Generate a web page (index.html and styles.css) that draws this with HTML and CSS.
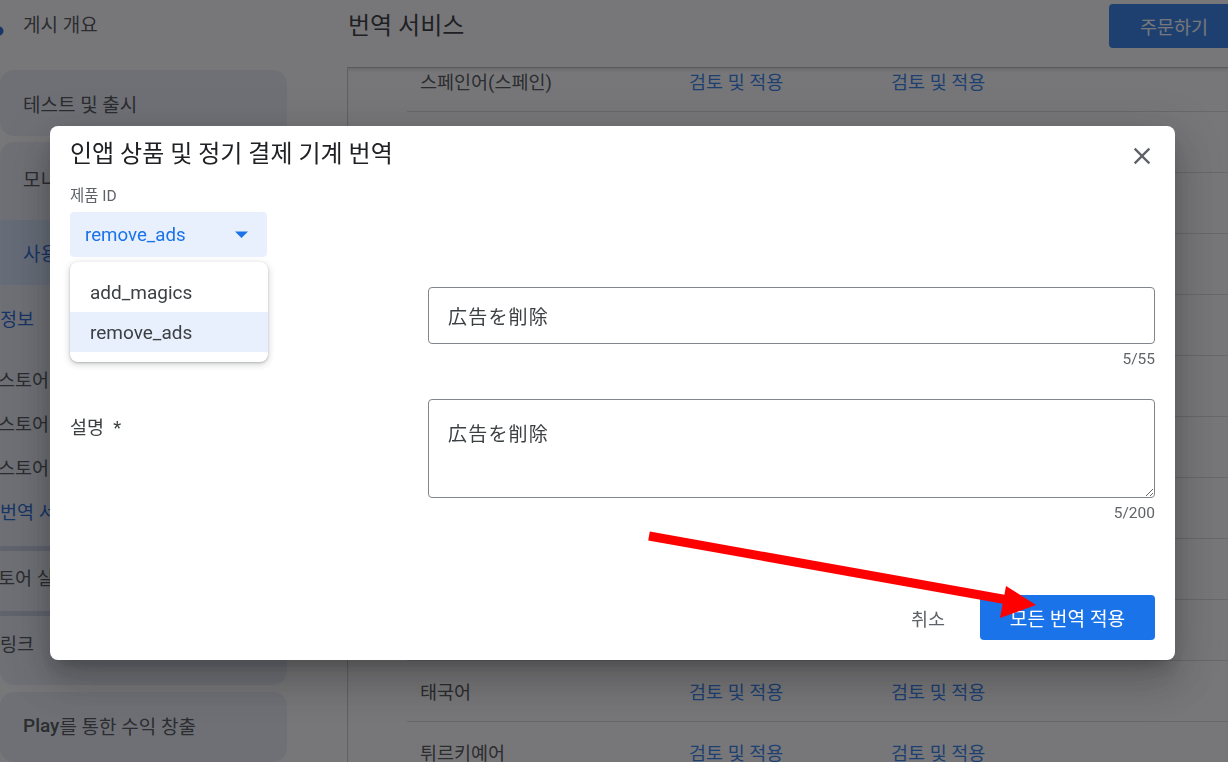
FILE: index.html
```html
<!DOCTYPE html>
<html lang="ko">
<head>
<meta charset="utf-8">
<title>번역 서비스</title>
<link rel="stylesheet" href="styles.css">
</head>
<body>
<div class="page">
  <aside class="sidebar">
    <div class="nav-top">
      <svg class="nav-icon" viewBox="0 0 16 24" width="16" height="24"><rect x="2" y="2" width="10" height="8" rx="2" fill="#5f6368"/><circle cx="11" cy="16" r="4.5" fill="#0b57d0"/></svg>
      <span>게시 개요</span>
    </div>
    <div class="nav-card card-a">테스트 및 출시</div>
    <div class="nav-card card-b">
      <div class="nav-row">모니터링 및 개선</div>
      <div class="nav-row active">사용자 확보</div>
      <div class="sub-list">
        <div class="sub link">정보</div>
        <div class="sub gap">스토어 설정</div>
        <div class="sub">스토어 등록정보</div>
        <div class="sub">스토어 맞춤설정</div>
        <div class="sub link">번역 서비스</div>
      </div>
      <div class="band"></div>
      <div class="sub-row exp">스토어 실험</div>
      <div class="band"></div>
      <div class="sub-row last">링크</div>
    </div>
    <div class="nav-card card-play"><span class="play">Play</span>를 통한 수익 창출</div>
  </aside>

  <main class="main">
    <header class="main-head">
      <h1 class="page-title">번역 서비스</h1>
      <button class="order-btn">주문하기</button>
    </header>
    <section class="table-wrap">
      <div class="rows">
        <div class="row"><span class="c1">스페인어(스페인)</span><span class="c2">검토 및 적용</span><span class="c3">검토 및 적용</span></div>
        <div class="row"><span class="c1">스페인어(미국)</span><span class="c2">검토 및 적용</span><span class="c3">검토 및 적용</span></div>
        <div class="row"><span class="c1">스와힐리어</span><span class="c2">검토 및 적용</span><span class="c3">검토 및 적용</span></div>
        <div class="row"><span class="c1">스웨덴어</span><span class="c2">검토 및 적용</span><span class="c3">검토 및 적용</span></div>
        <div class="row"><span class="c1">슬로바키아어</span><span class="c2">검토 및 적용</span><span class="c3">검토 및 적용</span></div>
        <div class="row"><span class="c1">슬로베니아어</span><span class="c2">검토 및 적용</span><span class="c3">검토 및 적용</span></div>
        <div class="row"><span class="c1">아랍어</span><span class="c2">검토 및 적용</span><span class="c3">검토 및 적용</span></div>
        <div class="row"><span class="c1">타갈로그어</span><span class="c2">검토 및 적용</span><span class="c3">검토 및 적용</span></div>
        <div class="row"><span class="c1">타밀어</span><span class="c2">검토 및 적용</span><span class="c3">검토 및 적용</span></div>
        <div class="row"><span class="c1">텔루구어</span><span class="c2">검토 및 적용</span><span class="c3">검토 및 적용</span></div>
        <div class="row"><span class="c1">태국어</span><span class="c2">검토 및 적용</span><span class="c3">검토 및 적용</span></div>
        <div class="row"><span class="c1">튀르키예어</span><span class="c2">검토 및 적용</span><span class="c3">검토 및 적용</span></div>
      </div>
    </section>
  </main>
</div>

<div class="scrim"></div>

<div class="dialog">
  <div class="dialog-head">
    <h2 class="dialog-title">인앱 상품 및 정기 결제 기계 번역</h2>
    <svg class="close" viewBox="0 0 24 24" width="28" height="28"><path d="M19 6.41L17.59 5 12 10.59 6.41 5 5 6.41 10.59 12 5 17.59 6.41 19 12 13.41 17.59 19 19 17.59 13.41 12z" fill="#5f6368"/></svg>
  </div>
  <div class="field-label">제품 ID</div>
  <div class="select">
    <span>remove_ads</span>
    <svg viewBox="0 0 13 7" width="13" height="7"><path d="M0 0.5h13L6.5 7z" fill="#1a73e8"/></svg>
  </div>

  <div class="form-row first">
    <div class="row-label">이름 *</div>
    <div class="row-field">
      <input class="text-input" type="text" value="広告を削除">
      <div class="counter">5/55</div>
    </div>
  </div>
  <div class="form-row second">
    <div class="row-label desc">설명&nbsp; *</div>
    <div class="row-field">
      <textarea class="text-area">広告を削除</textarea>
      <div class="counter">5/200</div>
    </div>
  </div>

  <div class="actions">
    <button class="btn-text">취소</button>
    <button class="btn-primary">모든 번역 적용</button>
  </div>

  <div class="menu">
    <div class="menu-item">add_magics</div>
    <div class="menu-item sel">remove_ads</div>
  </div>
</div>

<svg class="annot" width="1228" height="762" viewBox="0 0 1228 762">
  <line x1="649" y1="536" x2="1008" y2="600" stroke="#ff0000" stroke-width="9"/>
  <polygon points="1036,605 1006,586 1000,618" fill="#ff0000"/>
</svg>
</body>
</html>
```

FILE: styles.css
```css
* { box-sizing: border-box; }
html, body { margin: 0; padding: 0; }
body {
  width: 1228px;
  height: 762px;
  overflow: hidden;
  background: #fff;
  color: #202124;
  font-family: Roboto, "Noto Sans CJK KR", sans-serif;
}

.page { display: flex; height: 762px; overflow: hidden; }

/* sidebar */
.sidebar { width: 307px; flex: none; padding-right: 20px; overflow: hidden; }
.nav-top {
  height: 46px; display: flex; align-items: center;
  font-size: 19px; color: #3c4043;
}
.nav-icon { margin-left: -12px; margin-right: 19px; margin-top: 8px; flex: none; }
.nav-card { background: #e9eef6; border-radius: 14px; }
.card-a {
  margin-top: 24px; height: 66px; display: flex; align-items: center;
  padding-left: 23px; font-size: 19px; color: #3c4043;
}
.card-b { margin-top: 6px; padding-bottom: 11px; overflow: hidden; }
.nav-row {
  height: 72px; display: flex; align-items: center; padding-left: 23px;
  font-size: 19px; color: #3c4043; white-space: nowrap;
}
.nav-row.active { margin-top: 6px; height: 65px; background: #d3e3fd; color: #0b57d0; }
.sub-list { padding: 11px 0 13px; }
.sub {
  height: 44px; display: flex; align-items: center;
  font-size: 18.5px; color: #3c4043; white-space: nowrap; margin-left: -2px;
}
.sub.gap { margin-top: 17px; }
.sub.link { color: #0b57d0; margin-left: 0; }
.band { height: 5px; background: #c5cde0; }
.sub-row {
  display: flex; align-items: center; font-size: 18.5px; color: #3c4043; white-space: nowrap;
}
.sub-row.exp { height: 60px; padding-bottom: 8px; margin-left: -19px; }
.sub-row.last { height: 58px; padding-bottom: 4px; }
.card-play {
  margin-top: 7px; height: 70px; display: flex; align-items: center;
  padding: 0 0 4px 23px; font-size: 19px; color: #3c4043;
}
.play { font-weight: 500; }

/* main */
.main { flex: 1; min-width: 0; display: flex; flex-direction: column; }
.main-head {
  height: 48px; padding: 4px 0 0 41px;
  display: flex; align-items: center; justify-content: space-between;
}
.page-title { margin: 0 0 1px; font-size: 24px; font-weight: 400; line-height: 32px; color: #202124; }
.order-btn {
  width: 130px; height: 44px; margin-right: -11px; flex: none;
  border: 0; border-radius: 4px; background: #1a73e8; color: #fff;
  font-family: Roboto, "Noto Sans CJK KR", sans-serif; font-size: 18.5px;
}
.table-wrap {
  flex: 1; margin: 19px 0 0 40px; overflow: hidden;
  border-top: 1px solid #b0b4ba; border-left: 1px solid #c4c7c5;
  box-shadow: inset 0 3px 4px -2px rgba(0,0,0,.2);
}
.rows { margin-top: -17px; }
.row {
  margin-left: 59px; height: 61px; border-bottom: 1px solid #d6d8db;
  display: flex; align-items: center; font-size: 18.5px; white-space: nowrap;
}
.c1 { width: 282px; padding-left: 13px; color: #3c4043; }
.c2 { width: 202px; color: #1a73e8; }
.c3 { color: #1a73e8; }

/* scrim + dialog */
.scrim { position: fixed; inset: 0; background: rgba(32,33,36,.61); }
.dialog {
  position: fixed; left: 50px; top: 126px; width: 1125px; height: 534px;
  background: #fff; border-radius: 8px; padding: 12px 20px 20px;
  display: flex; flex-direction: column;
  box-shadow: 0 11px 15px -7px rgba(0,0,0,.2), 0 24px 38px 3px rgba(0,0,0,.14), 0 9px 46px 8px rgba(0,0,0,.12);
}
.dialog-head { height: 32px; display: flex; align-items: center; justify-content: space-between; }
.dialog-title { margin: 0; font-size: 24px; font-weight: 400; line-height: 32px; color: #202124; }
.close { margin-top: 4px; margin-right: -1px; flex: none; }
.field-label { margin-top: 16px; font-size: 15.5px; line-height: 20px; color: #5f6368; }
.select {
  margin-top: 6px; width: 197px; height: 45px; border-radius: 4px; background: #e8f0fe;
  display: flex; align-items: center; justify-content: space-between; padding: 0 19px 0 15px;
  font-size: 18.7px; color: #1a73e8;
}
.form-row { display: grid; grid-template-columns: 358px 1fr; }
.form-row.first { margin-top: 30px; }
.form-row.second { margin-top: 31px; }
.row-label { font-size: 18.5px; color: #3c4043; line-height: 24px; padding-top: 17px; }
.row-label.desc { padding-top: 17px; }
.text-input, .text-area {
  display: block; width: 100%; margin: 0;
  border: 1px solid #80868b; border-radius: 4px; outline: none; background: #fff;
  font-family: "Noto Sans CJK JP", sans-serif; font-size: 19px; letter-spacing: 1.2px; color: #3c4043;
}
.text-input { height: 57px; padding: 0 19px; }
.text-area { height: 99px; padding: 20px 19px; line-height: 26px; resize: vertical; }
.counter { margin-top: 6px; text-align: right; font-size: 15.5px; line-height: 18px; color: #5f6368; }
.actions { margin-top: auto; display: flex; justify-content: flex-end; gap: 12px; }
.btn-text {
  height: 45px; padding: 0 23px; border: 0; background: none; color: #5f6368;
  font-family: Roboto, "Noto Sans CJK KR", sans-serif; font-size: 18.5px;
}
.btn-primary {
  height: 45px; width: 175px; border: 0; border-radius: 4px; background: #1a73e8; color: #fff;
  font-family: Roboto, "Noto Sans CJK KR", sans-serif; font-size: 19.2px;
}
.menu {
  position: absolute; left: 20px; top: 136px; width: 198px; padding: 10px 0;
  background: #fff; border-radius: 8px;
  box-shadow: 0 2px 6px 1px rgba(60,64,67,.2), 0 1px 2px rgba(60,64,67,.25);
}
.menu-item { height: 40px; padding-left: 20px; display: flex; align-items: center; font-size: 19px; color: #3c4043; }
.menu-item.sel { background: #e8f0fe; }

.annot { position: fixed; left: 0; top: 0; pointer-events: none; }
```
